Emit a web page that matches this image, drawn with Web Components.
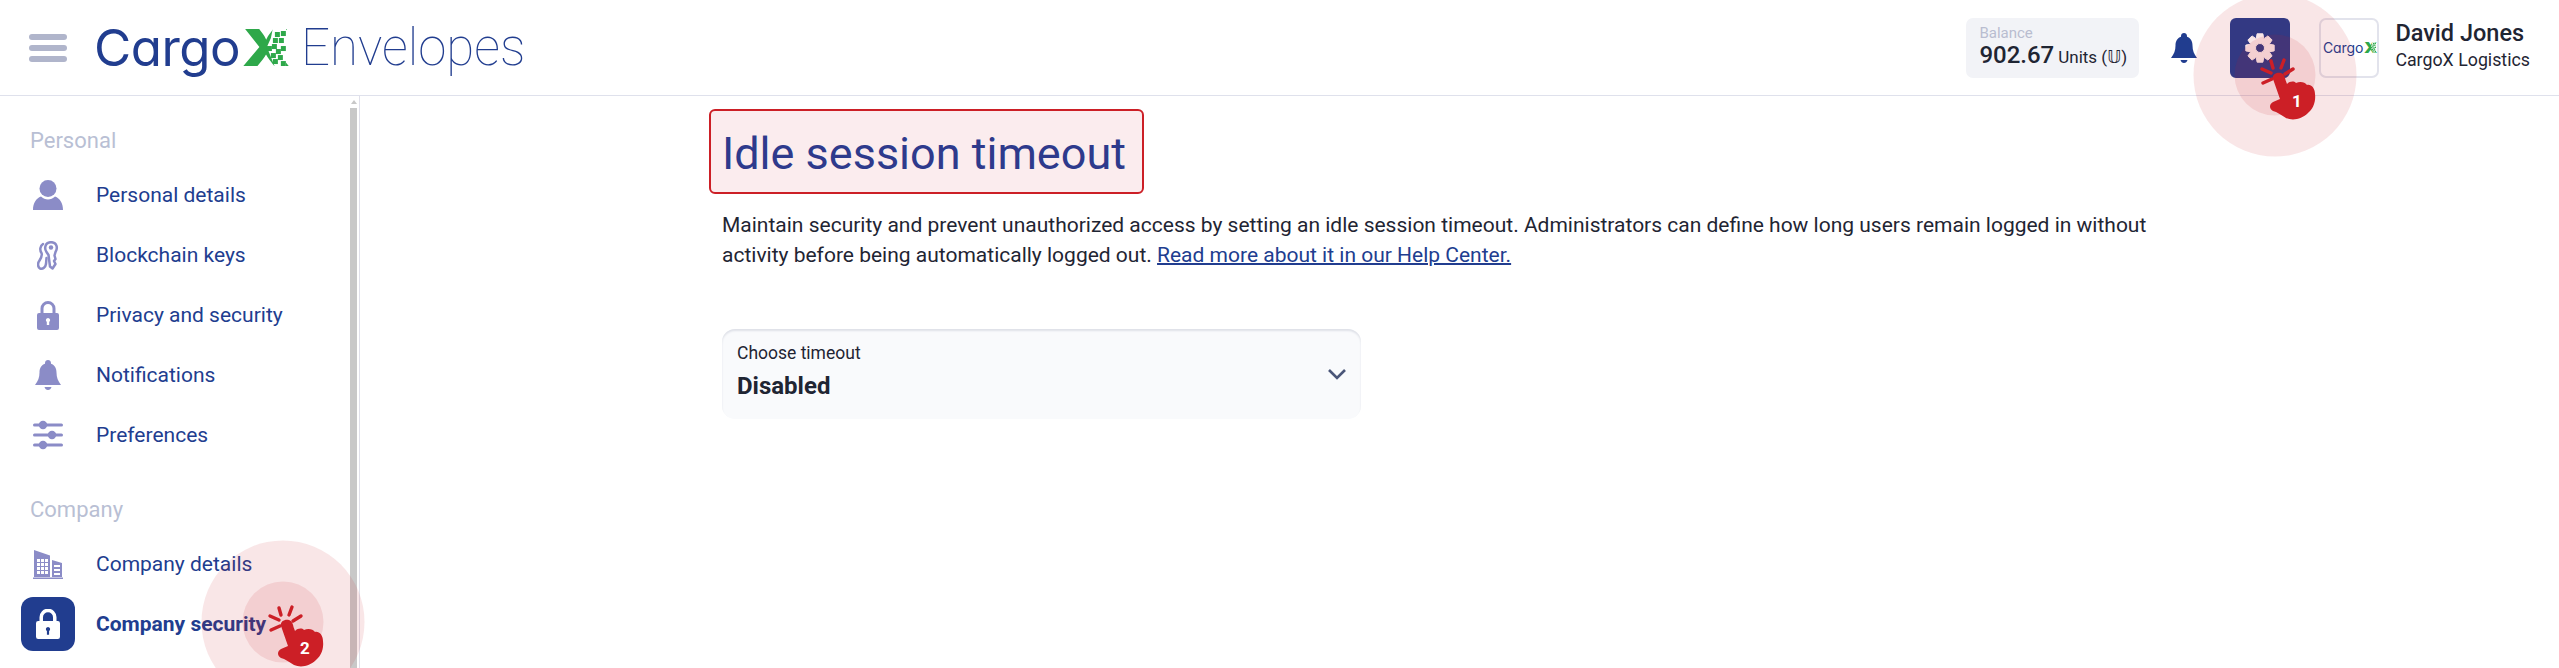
<!DOCTYPE html>
<html>
<head>
<meta charset="utf-8">
<title>Idle session timeout</title>
<style>
  html, body { margin: 0; height: 100%; overflow: hidden; background: #fff; }
  body { font-family: Roboto, "Liberation Sans", sans-serif; color: #1f2533; }
</style>
</head>
<body>
<app-shell></app-shell>

<script>
// logo: real text, only the pixel dissolve on the X is drawn
class CargoLogo extends HTMLElement {
    constructor() {
        super();
        this.attachShadow({mode: 'open'});
    }

    connectedCallback() {
        // squares of the dissolve, in px of a 44x37 box
        const px = [[39,2],[33,3],[31,9],[37,9],[30,15],[25,17],[39,17],[34,20],[29,24],[36,26],[31,30],[39,32]];
        const rects = px.map(p => `<rect x="${p[0]}" y="${p[1]}" width="5" height="5"/>`).join('');
        this.shadowRoot.innerHTML = `
        <style>
            :host {
                display: inline-flex;
                align-items: baseline;
                font-family: Inter, "Noto Sans", sans-serif;
                font-feature-settings: "cv11" 1;
                font-weight: 400;
                color: #213d8f;
                line-height: 1;
                letter-spacing: -0.01em;
            }
            .x {
                position: relative;
                display: inline-block;
                width: .86em;
                margin-left: .04em;
                color: #2ea84a;
                font-weight: 900;
                letter-spacing: 0;
            }
            .x b {
                display: inline-block;
                font-weight: 900;
                transform: scaleX(1.2);
                transform-origin: 0 50%;
            }
            svg {
                position: absolute;
                left: 0;
                top: .137em;
                width: .86em;
                height: .727em;
            }
        </style>
        <span>Cargo</span><span class="x"><b>X</b><svg viewBox="0 0 44 37" preserveAspectRatio="none"><path fill="#fff" d="M31 -1H46V38H33L29 28 25 18 29 9Z"/><g fill="#2ea84a">${rects}</g></svg></span>
        `;
    }
}
window.customElements.define('cargo-logo', CargoLogo);

// red click marker with its two rings, lies over the page
class ClickMarker extends HTMLElement {
    constructor() {
        super();
        this.attachShadow({mode: 'open'});
    }

    connectedCallback() {
        this.shadowRoot.innerHTML = `
        <style>
            :host {
                position: absolute;
                left: var(--cx);
                top: var(--cy);
                width: 164px;
                height: 164px;
                margin: -82px 0 0 -82px;
                pointer-events: none;
            }
            svg { display: block; overflow: visible; }
            text { font: 700 17px Roboto, sans-serif; fill: #fff; }
        </style>
        <svg width="164" height="164" viewBox="-82 -82 164 164">
            <circle r="81.5" fill="#cc1f26" fill-opacity=".11"/>
            <circle r="40.5" fill="#cc1f26" fill-opacity=".11"/>
            <g stroke="#cc1f26" stroke-width="3.4" stroke-linecap="round">
                <path d="M-4-14-2-7M9-15 6-7M18-6 10-1M-13-6-4-2M-12 8-3 4"/>
            </g>
            <path fill="#cc1f26" d="M-2 4C-3-1 2-3 6-2 9-1 10 2 10.500 5L12 9C15 6 19 6 21 8 25 6 30 7 32 10 36 9 40 13 40 19 41 27 38 34 33 38 27 44 18 46 11 43 6 40 2 37-2 36-6 34-6 29-2 27L5 24Z"/>
            <text x="22" y="32" text-anchor="middle">${this.getAttribute('n')}</text>
        </svg>
        `;
    }
}
window.customElements.define('click-marker', ClickMarker);

// 8 teeth gear
function gearPath(cx, cy, R, r) {
    let d = '';
    for (let i = 0; i < 8; i++) {
        const a = i * Math.PI / 4;
        const pts = [[r, a - 0.36], [R, a - 0.2], [R, a + 0.2], [r, a + 0.36]];
        pts.forEach(p => {
            d += (d ? 'L' : 'M') + (cx + p[0] * Math.sin(p[1])).toFixed(1) + ' ' + (cy - p[0] * Math.cos(p[1])).toFixed(1);
        });
    }
    return d + 'Z';
}

class AppHeader extends HTMLElement {
    constructor() {
        super();
        this.attachShadow({mode: 'open'});
    }

    connectedCallback() {
        this.shadowRoot.innerHTML = `
        <style>
            :host {
                display: flex;
                align-items: center;
                height: 95px;
                box-sizing: content-box;
                border-bottom: 1px solid #dfe1ec;
                padding: 0 29px 0 29px;
            }
            .burger {
                width: 38px;
                display: flex;
                flex-direction: column;
                gap: 5px;
            }
            .burger i {
                display: block;
                height: 6px;
                border-radius: 3px;
                background: #b0b5cb;
            }
            .main-logo { font-size: 51px; margin-left: 27px; }
            .product {
                font-size: 51px;
                font-weight: 100;
                color: #213d8f;
                margin-left: 15px;
            }
            .right { margin-left: auto; display: flex; align-items: center; }
            .balance {
                width: 173px;
                height: 60px;
                box-sizing: border-box;
                padding: 7px 13px;
                background: #f2f3f7;
                border-radius: 7px;
                white-space: nowrap;
            }
            .balance small {
                display: block;
                font-size: 15px;
                line-height: 16px;
                color: #b9bdd0;
            }
            .balance b { font-size: 24px; font-weight: 500; line-height: 29px; }
            .balance span { font-size: 17px; font-family: Roboto, "DejaVu Sans", sans-serif; }
            .bell { margin-left: 32px; display: block; }
            .gear {
                width: 60px;
                height: 60px;
                margin-left: 33px;
                border-radius: 6px;
                background: #213d8f;
                display: flex;
                align-items: center;
                justify-content: center;
            }
            .company {
                width: 60px;
                height: 60px;
                box-sizing: border-box;
                margin-left: 29px;
                border: 2px solid #e2e3ec;
                border-radius: 7px;
                display: flex;
                align-items: center;
                justify-content: center;
                font-size: 14px;
            }
            .user { margin: 0 0 6px 16px; }
            .name { font-size: 23.500px; font-weight: 500; line-height: 30px; }
            .org { font-size: 17.800px; line-height: 24px; }
        </style>
        <div class="burger"><i></i><i></i><i></i></div>
        <cargo-logo class="main-logo"></cargo-logo>
        <span class="product">Envelopes</span>
        <div class="right">
            <div class="balance">
                <small>Balance</small>
                <b>902.67</b> <span>Units (𝕌)</span>
            </div>
            <svg class="bell" width="26" height="30" viewBox="0 0 26 30"><path fill="#213d8f" d="M13 0c1.700 0 3 1.300 3 3v.800c3.700 1.200 5.500 4.700 5.500 8.700 0 5 1.500 8.500 4.500 12.500H0c3-4 4.500-7.500 4.500-12.500 0-4 1.800-7.500 5.500-8.700V3c0-1.700 1.300-3 3-3zM9.500 27h7c-.5 1.800-1.800 3-3.500 3s-3-1.200-3.500-3z"/></svg>
            <div class="gear">
                <svg width="30" height="30" viewBox="0 0 30 30"><path fill="#fff" stroke="#fff" stroke-width="1" stroke-linejoin="round" fill-rule="evenodd" d="${gearPath(15, 15, 14.500, 10.500)}M15 10.500a4.500 4.500 0 1 0 0 9 4.500 4.500 0 0 0 0-9z"/></svg>
            </div>
            <div class="company"><cargo-logo></cargo-logo></div>
            <div class="user">
                <div class="name">David Jones</div>
                <div class="org">CargoX Logistics</div>
            </div>
        </div>
        `;
    }
}
window.customElements.define('app-header', AppHeader);

class NavItem extends HTMLElement {
    constructor() {
        super();
        this.attachShadow({mode: 'open'});
    }

    connectedCallback() {
        this.shadowRoot.innerHTML = `
        <style>
            :host {
                display: flex;
                align-items: center;
                height: 60px;
                padding-left: 21px;
                color: #213d8f;
                font-size: 21px;
            }
            .ico {
                width: 54px;
                height: 54px;
                flex: none;
                border-radius: 12px;
                display: flex;
                align-items: center;
                justify-content: center;
                color: #8b8cc7;
            }
            :host([active]) .ico { background: #213d8f; color: #fff; }
            :host([active]) { font-weight: 700; }
            .label { margin-left: 21px; }
        </style>
        <div class="ico"><slot></slot></div>
        <span class="label">${this.getAttribute('label')}</span>
        `;
    }
}
window.customElements.define('nav-item', NavItem);

class SideNav extends HTMLElement {
    constructor() {
        super();
        this.attachShadow({mode: 'open'});
    }

    connectedCallback() {
        this.shadowRoot.innerHTML = `
        <style>
            :host {
                display: flex;
                width: 360px;
                box-sizing: border-box;
                flex: none;
                border-right: 1px solid #e0e0ea;
                overflow: hidden;
            }
            .list { flex: 1; padding-top: 30px; min-width: 0; }
            .head {
                font-size: 22px;
                line-height: 30px;
                color: #b9bfd4;
                padding-left: 30px;
                margin-bottom: 9px;
            }
            .head.second { margin-top: 30px; margin-bottom: 9px; }
            .track {
                width: 7px;
                margin-right: 2px;
                display: flex;
                flex-direction: column;
                align-items: center;
            }
            .arrow {
                margin: 4px 0 4px;
                border: 3px solid transparent;
                border-top: 0;
                border-bottom: 4px solid #c8c8c8;
            }
            .thumb { flex: 1; width: 7px; background: #c8c8c8; }
        </style>
        <div class="list">
            <div class="head">Personal</div>
            <slot name="personal"></slot>
            <div class="head second">Company</div>
            <slot name="company"></slot>
        </div>
        <div class="track"><div class="arrow"></div><div class="thumb"></div></div>
        `;
    }
}
window.customElements.define('side-nav', SideNav);

class TimeoutSelect extends HTMLElement {
    constructor() {
        super();
        this.attachShadow({mode: 'open'});
    }

    connectedCallback() {
        this.shadowRoot.innerHTML = `
        <style>
            :host {
                display: flex;
                align-items: center;
                justify-content: space-between;
                width: 639px;
                height: 90px;
                box-sizing: border-box;
                padding: 0 15px 5px 15px;
                background: #f9fafc;
                border-radius: 13px;
                box-shadow: inset 0 2px 2px #dfe1e8;
            }
            .lab { font-size: 17.500px; line-height: 24px; }
            .val { font-size: 24px; font-weight: 700; line-height: 32px; margin-top: 5px; }
            svg { margin-top: 5px; }
        </style>
        <div>
            <div class="lab">Choose timeout</div>
            <div class="val">Disabled</div>
        </div>
        <svg width="18" height="11" viewBox="0 0 18 11"><path fill="none" stroke="#4a5578" stroke-width="2.600" d="M1 1l8 8 8-8"/></svg>
        `;
    }
}
window.customElements.define('timeout-select', TimeoutSelect);

class PageContent extends HTMLElement {
    constructor() {
        super();
        this.attachShadow({mode: 'open'});
    }

    connectedCallback() {
        this.shadowRoot.innerHTML = `
        <style>
            :host {
                display: block;
                flex: 1;
                padding: 13px 0 0 362px;
            }
            h1 {
                display: inline-block;
                margin: 0 0 0 -13px;
                padding: 2px 16px 0 11px;
                height: 85px;
                box-sizing: border-box;
                border: 2px solid #cc1f26;
                border-radius: 6px;
                background: #fbecee;
                color: #2e3a8c;
                font-size: 45px;
                font-weight: 400;
                line-height: 81px;
            }
            p {
                margin: 16px 0 59px;
                width: 1440px;
                font-size: 21px;
                line-height: 30px;
                color: #1f2533;
            }
            a { color: #213d8f; text-decoration-thickness: 2px; }
        </style>
        <h1>Idle session timeout</h1>
        <p>Maintain security and prevent unauthorized access by setting an idle session timeout. Administrators can define how long users remain logged in without activity before being automatically logged out. <a href="#">Read more about it in our Help Center.</a></p>
        <timeout-select></timeout-select>
        `;
    }
}
window.customElements.define('page-content', PageContent);

const LOCK = 'M2 12h18a2 2 0 0 1 2 2v13a2 2 0 0 1-2 2H2a2 2 0 0 1-2-2V14a2 2 0 0 1 2-2zM11 17a2.200 2.200 0 0 0-1.200 4v3h2.400v-3A2.200 2.200 0 0 0 11 17z';
const BLDG_HOLES = [9, 13, 17, 21].map(y => [4, 8, 12].map(x => `M${x} ${y}h3v3h-3z`).join('')).join('') + [15, 19, 23].map(y => `M21 ${y}h6v2h-6z`).join('');

class AppShell extends HTMLElement {
    constructor() {
        super();
        this.attachShadow({mode: 'open'});
    }

    connectedCallback() {
        this.shadowRoot.innerHTML = `
        <style>
            :host {
                display: flex;
                flex-direction: column;
                height: 668px;
                position: relative;
                overflow: hidden;
            }
            .body { flex: 1; display: flex; min-height: 0; }
            svg { display: block; }
        </style>
        <app-header></app-header>
        <div class="body">
            <side-nav>
                <nav-item slot="personal" label="Personal details">
                    <svg width="30" height="30" viewBox="0 0 30 30"><circle cx="15" cy="8.500" r="8.500" fill="currentColor"/><path fill="currentColor" d="M0 30c0-7 3-11.500 8-13.500 2 2 4.500 3 7 3s5-1 7-3c5 2 8 6.500 8 13.500z"/></svg>
                </nav-item>
                <nav-item slot="personal" label="Blockchain keys">
                    <svg width="22" height="29" viewBox="0 0 22 29"><g fill="none" stroke="currentColor" stroke-width="2.500" stroke-linejoin="round" stroke-linecap="round"><path d="M9.500 11C7 7.500 8 1.200 14 1.200S21 7 18.500 11L17.500 14.500 18.500 18 17 20 18.500 23 15.500 27.500 13 25.500 11.500 14Z"/><path d="M6 3C3 5 2.500 9 4.500 12 5.500 14 4 17 2.500 19.500.500 22 .5 26 3 27.500 6 28.500 8.500 26 9 23L9.500 17"/></g><circle cx="14" cy="6.500" r="2.200" fill="currentColor"/></svg>
                </nav-item>
                <nav-item slot="personal" label="Privacy and security">
                    <svg width="22" height="29" viewBox="0 0 22 29"><path fill="currentColor" fill-rule="evenodd" d="${LOCK}"/><path fill="none" stroke="currentColor" stroke-width="3" d="M5 13V7.500a6 6 0 0 1 12 0V13"/></svg>
                </nav-item>
                <nav-item slot="personal" label="Notifications">
                    <svg width="26" height="30" viewBox="0 0 26 30"><path fill="currentColor" d="M13 0c1.700 0 3 1.300 3 3v.800c3.700 1.200 5.500 4.700 5.500 8.700 0 5 1.500 8.500 4.500 12.500H0c3-4 4.500-7.500 4.500-12.500 0-4 1.800-7.500 5.500-8.700V3c0-1.700 1.300-3 3-3zM9.500 27h7c-.5 1.800-1.800 3-3.500 3s-3-1.200-3.500-3z"/></svg>
                </nav-item>
                <nav-item slot="personal" label="Preferences">
                    <svg width="30" height="30" viewBox="0 0 30 30"><g fill="currentColor"><rect y="3.500" width="30" height="3" rx="1.500"/><rect y="13.500" width="30" height="3" rx="1.500"/><rect y="23.500" width="30" height="3" rx="1.500"/><circle cx="10" cy="5" r="4.200"/><circle cx="19" cy="15" r="4.200"/><circle cx="10" cy="25" r="4.200"/></g></svg>
                </nav-item>
                <nav-item slot="company" label="Company details">
                    <svg width="30" height="29" viewBox="0 0 30 29"><path fill="currentColor" fill-rule="evenodd" d="M1 0l16 5.500V27H1z${BLDG_HOLES}M19 10l10 3v14H19z"/><rect y="27.500" width="30" height="1.500" fill="currentColor"/></svg>
                </nav-item>
                <nav-item slot="company" label="Company security" active>
                    <svg width="24" height="30" viewBox="0 0 22 27.500"><path fill="currentColor" fill-rule="evenodd" d="M2 11h18a2 2 0 0 1 2 2v12.500a2 2 0 0 1-2 2H2a2 2 0 0 1-2-2V13a2 2 0 0 1 2-2zM11 16.500a2 2 0 0 0-1 3.700v3.300h2v-3.300a2 2 0 0 0-1-3.700z"/><path fill="none" stroke="currentColor" stroke-width="3.200" d="M4.800 12V7.500a6.200 6.200 0 0 1 12.400 0V12"/></svg>
                </nav-item>
            </side-nav>
            <page-content></page-content>
        </div>
        <click-marker n="1" style="--cx:2275px;--cy:75px"></click-marker>
        <click-marker n="2" style="--cx:283px;--cy:622px"></click-marker>
        `;
    }
}
window.customElements.define('app-shell', AppShell);
</script>
</body>
</html>
